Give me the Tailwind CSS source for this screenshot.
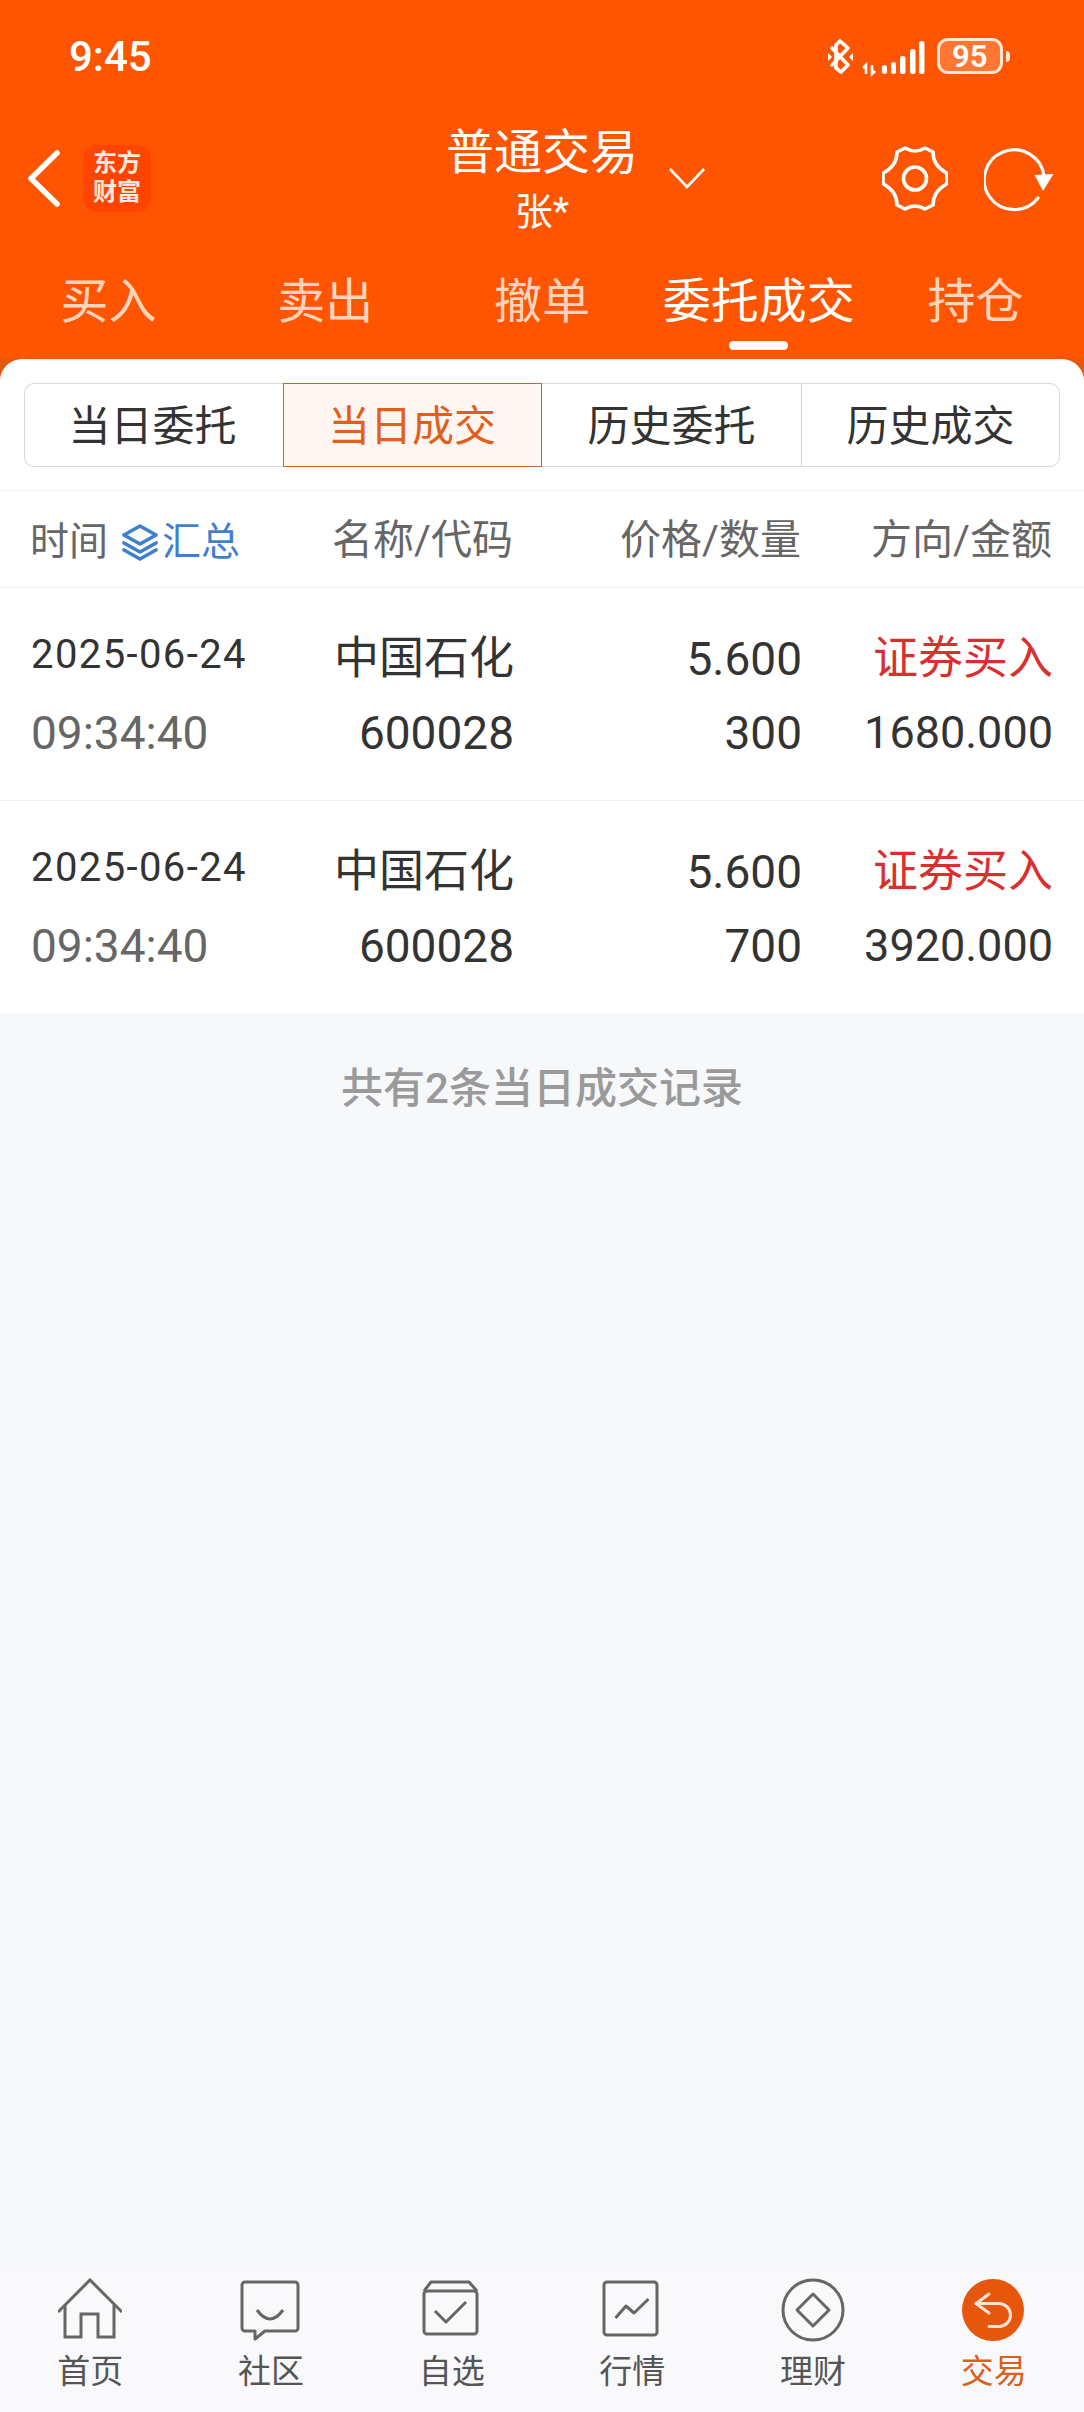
<!DOCTYPE html>
<html lang="zh-CN">
<head>
  <meta charset="UTF-8">
  <meta name="viewport" content="width=device-width, initial-scale=1.0">
  <script src="https://cdn.jsdelivr.net/npm/@tailwindcss/browser@4"></script>
</head>
<body class="font-['Roboto','Noto_Sans_CJK_SC',sans-serif]">
<div class="flex h-[2412px] w-[1084px] flex-col overflow-hidden bg-[#f7f8fa]">

  <!-- Orange header -->
  <header class="h-[359px] shrink-0 bg-[#ff5500] text-white">
    <!-- Status bar -->
    <div class="flex h-[112px] items-center pl-[69px] pr-[74px]">
      <span class="pt-[2px] text-[42px] leading-none font-medium">9:45</span>
      <div class="ml-auto flex items-center">
        <svg class="h-[37px] w-[25px]" viewBox="0 0 25 37" fill="none" stroke="currentColor" stroke-width="3.6" stroke-linejoin="round" stroke-linecap="round">
          <path d="M4 10 L20 27 L13 34 L8 30 V7 L12 3 L20 10 L4 27"/>
          <path d="M0 15 L4 19 L0 23 Z M25 15 L21 19 L25 23 Z" fill="currentColor" stroke="none"/>
        </svg>
        <svg class="ml-[7px] mt-[4px] h-[40px] w-[68px]" viewBox="0 0 68 40" fill="currentColor">
          <path d="M6 36 V27 L3 30 M12 27 V36 L15 33" fill="none" stroke="currentColor" stroke-width="2.6"/>
          <rect x="22" y="27" width="5" height="9" rx="2.5"/>
          <rect x="31" y="24" width="5" height="12" rx="2.5"/>
          <rect x="40" y="18" width="5.5" height="18" rx="2.5"/>
          <rect x="50" y="11" width="5.5" height="25" rx="2.5"/>
          <rect x="59" y="3" width="5.5" height="33" rx="2.5"/>
        </svg>
        <div class="ml-[9px] flex h-[36px] w-[66px] items-center overflow-hidden rounded-[11px] border-[3px] border-[#ffe6d8] bg-white/20 pl-[12px] text-[31px] leading-none font-semibold">95</div>
        <div class="ml-[3px] h-[11px] w-[4px] rounded-r-full bg-[#ffe6d8]"></div>
      </div>
    </div>

    <!-- Toolbar -->
    <div class="grid h-[132px] grid-cols-[1fr_auto_1fr] items-center">
      <div class="flex items-center pl-[27px]">
        <svg class="h-[57px] w-[34px]" viewBox="0 0 34 57" fill="none" stroke="currentColor" stroke-width="5.5" stroke-linecap="round" stroke-linejoin="round">
          <path d="M30 3 L4 28.5 L30 54"/>
        </svg>
        <div class="ml-[22px] flex h-[67px] w-[68px] flex-col items-center justify-center rounded-[14px] bg-[#ff4400] text-[24px] leading-[29px] font-bold text-[#ffe9dc]">
          <span>东方</span>
          <span>财富</span>
        </div>
      </div>
      <div class="flex flex-col items-center pt-[4px]">
        <span class="text-[48px] leading-[48px]">普通交易</span>
        <span class="mt-[15px] text-[38px] leading-[40px]">张*</span>
      </div>
      <div class="flex items-center pr-[30px]">
        <svg class="ml-[30px] h-[22px] w-[38px]" viewBox="0 0 38 22" fill="none" stroke="currentColor" stroke-width="2.6">
          <path d="M2 2 L19 20 L36 2"/>
        </svg>
        <svg class="ml-auto h-[67px] w-[66px]" viewBox="0 0 66 67" fill="none" stroke="currentColor" stroke-width="3.6" stroke-linejoin="round">
          <path d="M23 3 Q33 9 43 3 L51 7 Q51 20 63 27 Q65 28 65 30 L65 37 Q65 39 63 40 Q51 47 51 60 L43 64 Q33 58 23 64 L15 60 Q15 47 3 40 Q1 39 1 37 L1 30 Q1 28 3 27 Q15 20 15 7 Z"/>
          <circle cx="33" cy="33.5" r="11.5"/>
        </svg>
        <svg class="ml-[36px] h-[68px] w-[70px]" viewBox="0 0 70 68" fill="none" stroke="currentColor" stroke-width="3.2" stroke-linecap="round">
          <path d="M54 54 A30 30 0 1 1 60 32"/>
          <path d="M50.5 31 L69.5 30 L59 47 Z" fill="currentColor" stroke="none"/>
        </svg>
      </div>
    </div>

    <!-- Trade tabs -->
    <nav class="flex pt-[34px] text-[48px] leading-[48px] text-white/75">
      <div class="flex-1 text-center">买入</div>
      <div class="flex-1 text-center">卖出</div>
      <div class="flex-1 text-center">撤单</div>
      <div class="flex flex-1 flex-col items-center text-white">
        <span>委托成交</span>
        <span class="mt-[15px] h-[9px] w-[59px] rounded-full bg-white"></span>
      </div>
      <div class="flex-1 text-center">持仓</div>
    </nav>
  </header>

  <!-- Card -->
  <div class="shrink-0 bg-[#e0590c]">
    <div class="rounded-t-[22px] bg-white pt-[24px]">
      <div class="mx-[24px] grid h-[84px] grid-cols-4 text-[42px] text-[#333333]">
        <div class="flex items-center justify-center rounded-l-[10px] border border-r-0 border-[#d9d9d9] pr-[3px] pt-[2px]">当日委托</div>
        <div class="flex items-center justify-center border border-[#bd6a35] bg-[#fff6f2] pr-[1px] pt-[2px] text-[#e0601a]">当日成交</div>
        <div class="flex items-center justify-center border-y border-[#d9d9d9] pt-[2px]">历史委托</div>
        <div class="flex items-center justify-center rounded-r-[10px] border border-[#d9d9d9] border-l-[#ccd3da] pt-[2px]">历史成交</div>
      </div>

      <!-- Column heads -->
      <div class="mt-[23px] grid h-[98px] grid-cols-[270px_213px_288px_251px] items-center border-y border-[#f0f0f0] pl-[30px] pr-[31px] text-[41px] text-[#666666]">
        <div class="flex items-center pt-[6px] text-[39px]">
          <span>时间</span>
          <svg class="ml-[14px] h-[37px] w-[36px]" viewBox="0 0 36 37" fill="none" stroke="#3f7fd0" stroke-width="3.6" stroke-linejoin="round" stroke-linecap="round">
            <path d="M18 2 L34 11 L18 20 L2 11 Z"/>
            <path d="M2 19 L18 28 L34 19"/>
            <path d="M2 26 L18 35 L34 26"/>
          </svg>
          <span class="ml-[4px] text-[#3f7fd0]">汇总</span>
        </div>
        <div class="pl-[1px] pt-[4px] text-right">名称/代码</div>
        <div class="pt-[4px] text-right">价格/数量</div>
        <div class="pt-[4px] text-right">方向/金额</div>
      </div>

      <!-- Deals -->
      <div class="grid h-[213px] grid-cols-[270px_213px_288px_251px] border-b border-[#f0f0f0] pl-[31px] pr-[31px] pt-[34px] text-[46px] leading-[74px] text-[#333333]">
        <div>
          <div class="h-[74px] text-[40px] leading-[66px] tracking-[1.4px]">2025-06-24</div>
          <div class="text-[#666666]">09:34:40</div>
        </div>
        <div class="text-right">
          <div class="h-[74px] text-[45px]">中国石化</div>
          <div>600028</div>
        </div>
        <div class="text-right">
          <div>5.600</div>
          <div>300</div>
        </div>
        <div class="text-right">
          <div class="h-[74px] text-[45px] text-[#d9302f]">证券买入</div>
          <div class="text-[45px]">1680.000</div>
        </div>
      </div>
      <div class="grid h-[212px] grid-cols-[270px_213px_288px_251px] pl-[31px] pr-[31px] pt-[34px] text-[46px] leading-[74px] text-[#333333]">
        <div>
          <div class="h-[74px] text-[40px] leading-[66px] tracking-[1.4px]">2025-06-24</div>
          <div class="text-[#666666]">09:34:40</div>
        </div>
        <div class="text-right">
          <div class="h-[74px] text-[45px]">中国石化</div>
          <div>600028</div>
        </div>
        <div class="text-right">
          <div>5.600</div>
          <div>700</div>
        </div>
        <div class="text-right">
          <div class="h-[74px] text-[45px] text-[#d9302f]">证券买入</div>
          <div class="text-[45px]">3920.000</div>
        </div>
      </div>
    </div>
  </div>

  <main class="flex-1 pt-[51px] text-center text-[42px] leading-[50px] font-medium text-[#9a9a9a]">共有2条当日成交记录</main>

  <!-- Bottom tab bar -->
  <nav class="flex h-[146px] shrink-0 bg-[#f9f9fb] pt-[12px] text-[33px] leading-[32px] text-[#555555]">
    <div class="flex flex-1 flex-col items-center">
      <svg class="h-[64px] w-[64px]" viewBox="0 0 64 64" fill="none" stroke="#666666" stroke-width="3">
        <path d="M0 34 L32 2 L64 34"/>
        <path d="M7 27 V59 H23 V36 H40 V59 H56 V27"/>
      </svg>
      <span class="mt-[14px]">首页</span>
    </div>
    <div class="flex flex-1 flex-col items-center">
      <svg class="h-[64px] w-[64px]" viewBox="0 0 64 64" fill="none" stroke="#666666" stroke-width="3" stroke-linejoin="round">
        <path d="M6 4 H56 a3 3 0 0 1 3 3 V50 a3 3 0 0 1 -3 3 H26 L16 61 V53 H6 a3 3 0 0 1 -3 -3 V7 a3 3 0 0 1 3 -3 Z"/>
        <path d="M18 32 Q31 50 44 32"/>
      </svg>
      <span class="mt-[14px]">社区</span>
    </div>
    <div class="flex flex-1 flex-col items-center">
      <svg class="h-[64px] w-[64px]" viewBox="0 0 64 64" fill="none" stroke="#666666" stroke-width="3" stroke-linejoin="round">
        <path d="M4 13 L11 4 H49 L57 13"/>
        <rect x="4" y="13" width="53" height="43" rx="3"/>
        <path d="M15 33 L26 44 L46 24"/>
      </svg>
      <span class="mt-[14px]">自选</span>
    </div>
    <div class="flex flex-1 flex-col items-center">
      <svg class="h-[64px] w-[64px]" viewBox="0 0 64 64" fill="none" stroke="#666666" stroke-width="3" stroke-linejoin="round">
        <rect x="4" y="4" width="53" height="53" rx="3"/>
        <path d="M15.5 40 L26 28 L34 35 L48.5 21"/>
      </svg>
      <span class="mt-[14px]">行情</span>
    </div>
    <div class="flex flex-1 flex-col items-center">
      <svg class="h-[64px] w-[64px]" viewBox="0 0 64 64" fill="none" stroke="#666666" stroke-width="3" stroke-linejoin="round">
        <circle cx="32" cy="32" r="30"/>
        <path d="M32 16 L48 32 L32 48 L16 32 Z"/>
      </svg>
      <span class="mt-[14px]">理财</span>
    </div>
    <div class="flex flex-1 flex-col items-center text-[#d9601f]">
      <svg class="h-[64px] w-[64px]" viewBox="0 0 64 64" fill="none" stroke="#ffe6d8" stroke-width="3" stroke-linecap="round" stroke-linejoin="round">
        <circle cx="31" cy="32" r="31" fill="#e6560c" stroke="none"/>
        <path d="M27 16 L14 25.5 L27 35"/>
        <path d="M14 25.5 H37 a11.5 11.5 0 0 1 0 23 H27"/>
      </svg>
      <span class="mt-[14px]">交易</span>
    </div>
  </nav>
</div>
</body>
</html>
